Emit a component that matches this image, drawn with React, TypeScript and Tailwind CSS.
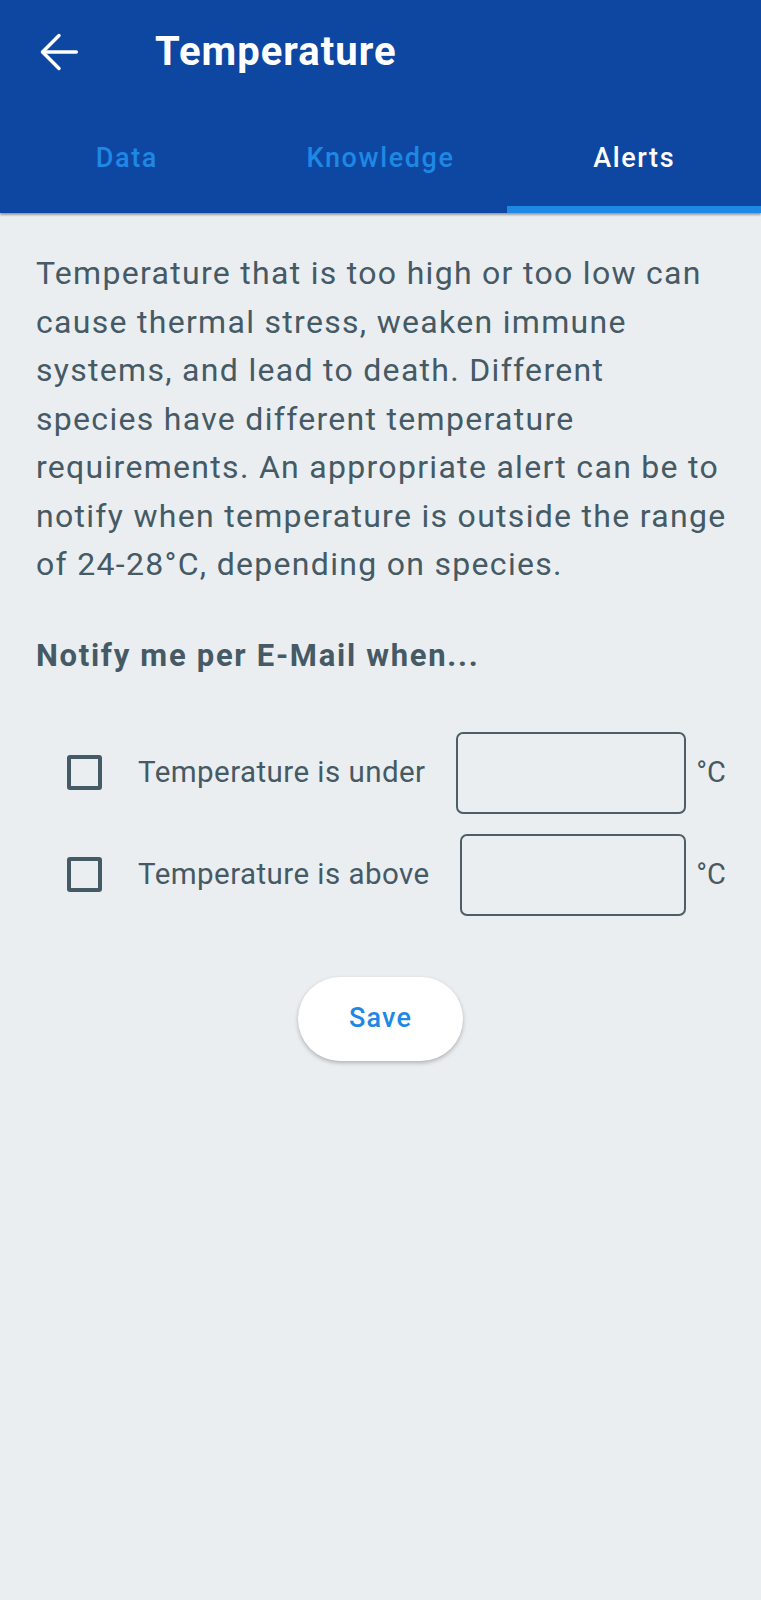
import React, { useState } from "react";

const tabs = ["Data", "Knowledge", "Alerts"];

const intro = [
  "Temperature that is too high or too low can",
  "cause thermal stress, weaken immune",
  "systems, and lead to death. Different",
  "species have different temperature",
  "requirements. An appropriate alert can be to",
  "notify when temperature is outside the range",
  "of 24-28°C, depending on species.",
];

function ArrowBack() {
  return (
    <svg width="52" height="52" viewBox="0 0 24 24" fill="none" stroke="#ffffff" strokeWidth="1.6" strokeLinecap="round" strokeLinejoin="round">
      <path d="M20 12H4.6" />
      <path d="M12 4.4 4.4 12l7.6 7.6" />
    </svg>
  );
}

function AlertRow({ label }: { label: string }) {
  const [checked, setChecked] = useState(false);
  return (
    <div className="flex items-center h-[82px]">
      <button
        onClick={() => setChecked(!checked)}
        className="ml-[67px] w-[35px] h-[35px] rounded-[3px] border-[4px] border-[#455a64] shrink-0"
      />
      <span className="ml-[36px] text-[29.5px] tracking-[0.45px] text-[#455a64] whitespace-nowrap">{label}</span>
      <input className="ml-[30px] flex-1 min-w-0 h-[82px] rounded-[7px] border-2 border-[#4d5e66] bg-transparent outline-none px-3 text-[29px]" />
      <span className="ml-[10px] mr-[35px] text-[29px] text-[#455a64]">°C</span>
    </div>
  );
}

export default function App() {
  const active = 2;
  return (
    <div
      className="min-h-[1600px] bg-[#ebeef1]"
      style={{ fontFamily: "Roboto, 'Liberation Sans', sans-serif" }}
    >
      <div className="bg-[#0e47a1] shadow-[0_2px_2px_rgba(0,0,0,0.35)]">
        <div className="h-[104px] flex items-center">
          <div className="ml-[33px] w-[52px] h-[52px] flex items-center justify-center">
            <ArrowBack />
          </div>
          <h1 className="ml-[70px] text-[40px] font-bold text-white tracking-[1px]">Temperature</h1>
        </div>
        <div className="flex h-[109px]">
          {tabs.map((t, i) => (
            <div key={t} className="flex-1 flex flex-col">
              <div
                className={
                  "flex-1 pt-[6px] flex items-center justify-center text-[27px] tracking-[1.6px] font-medium " +
                  (i === active ? "text-white" : "text-[#1e88e5]")
                }
              >
                {t}
              </div>
              <div className={"h-[7px] " + (i === active ? "bg-[#1e88e5]" : "bg-transparent")} />
            </div>
          ))}
        </div>
      </div>

      <p className="pl-[36px] pr-[8px] pt-[36px] text-[32px] tracking-[1.3px] leading-[48.5px] text-[#455a64]">
        {intro.map((line) => (
          <span key={line} className="block whitespace-nowrap">
            {line}
          </span>
        ))}
      </p>

      <h2 className="px-[36px] mt-[47px] text-[31px] tracking-[1.7px] leading-[40px] font-bold text-[#455a64]">
        Notify me per E-Mail when...
      </h2>

      <div className="mt-[56px] flex flex-col gap-[20px]">
        <AlertRow label="Temperature is under" />
        <AlertRow label="Temperature is above" />
      </div>

      <div className="mt-[61px] flex justify-center">
        <button className="w-[165px] h-[84px] rounded-full bg-white text-[#1e88e5] text-[27px] tracking-[1.2px] font-medium shadow-[0_2px_4px_rgba(0,0,0,0.25)]">
          Save
        </button>
      </div>
    </div>
  );
}
